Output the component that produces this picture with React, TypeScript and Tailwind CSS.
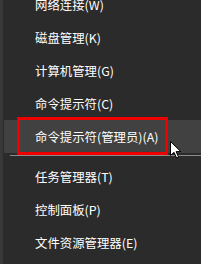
import React from "react";

const top = ["网络连接(W)", "磁盘管理(K)", "计算机管理(G)", "命令提示符(C)"];
const bottom = ["任务管理器(T)", "控制面板(P)", "文件资源管理器(E)"];

const Row: React.FC<{ label: string; active?: boolean }> = ({ label, active }) => (
  <div
    className={`h-[33px] flex items-center pt-[2px] pl-[31px] text-[12.4px] leading-none text-white ${
      active ? "bg-[#414141]" : ""
    }`}
  >
    {label}
  </div>
);

export default function App() {
  return (
    <div
      className="relative w-[201px] h-[264px] overflow-hidden bg-[#2b2b2b] border-l-[3px] border-[#393939]"
      style={{ fontFamily: '"Noto Sans CJK SC", "Noto Sans", sans-serif' }}
    >
      <div className="mt-[-12px] pl-px">
        {top.map((t) => (
          <Row key={t} label={t} />
        ))}
        <Row label="命令提示符(管理员)(A)" active />
        <div className="h-[7px] pt-[2px]">
          <div className="h-px ml-[6px] bg-[#8a8a8a]" />
        </div>
        {bottom.map((t) => (
          <Row key={t} label={t} />
        ))}
      </div>

      {/* red annotation box */}
      <div className="absolute left-[14px] top-[117px] w-[151px] h-[38px] border-[3px] border-[#ee0000]" />

      {/* mouse cursor */}
      <svg
        className="absolute left-[167px] top-[141px]"
        width="12"
        height="18"
        viewBox="0 0 12 18"
      >
        <path
          d="M0.5 0.5 L0.5 14.5 L4 11.3 L6.6 17 L8.6 16.1 L6.1 10.6 L10.8 10.6 Z"
          fill="#ffffff"
          stroke="#000000"
          strokeWidth="1"
          strokeLinejoin="round"
        />
      </svg>
    </div>
  );
}
